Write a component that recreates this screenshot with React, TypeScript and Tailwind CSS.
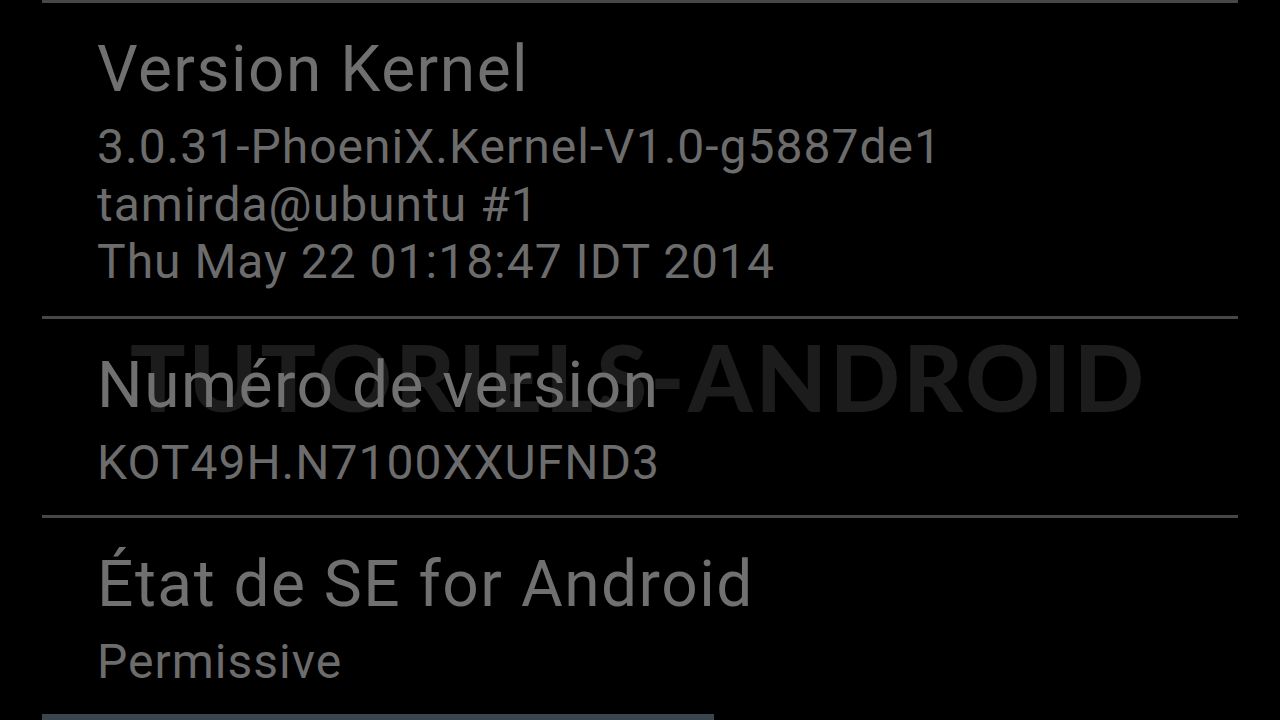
import React from "react";

type Item = { title: string; lines: string[]; pb: string };

const items: Item[] = [
  {
    title: "Version Kernel",
    lines: [
      "3.0.31-PhoeniX.Kernel-V1.0-g5887de1",
      "tamirda@ubuntu #1",
      "Thu May 22 01:18:47 IDT 2014",
    ],
    pb: "pb-[25.5px]",
  },
  { title: "Numéro de version", lines: ["KOT49H.N7100XXUFND3"], pb: "pb-[23.5px]" },
  { title: "État de SE for Android", lines: ["Permissive"], pb: "pb-[23.5px]" },
];

function Row({ item }: { item: Item }) {
  return (
    <div className={`pl-[55px] pt-[29px] ${item.pb}`}>
      <div className="text-[64px] leading-[76px] tracking-[1.5px] text-[#707070]">{item.title}</div>
      <div className="mt-[10px] text-[48px] leading-[57.5px] tracking-[1px] text-[#6c6c6c]">
        {item.lines.map((l) => (
          <div key={l}>{l}</div>
        ))}
      </div>
    </div>
  );
}

export default function App() {
  return (
    <div
      className="relative w-[1280px] h-[720px] bg-black overflow-hidden"
      style={{ fontFamily: "Roboto, 'Noto Sans', sans-serif" }}
    >
      {/* watermark, behind the list */}
      <div
        className="absolute left-[130px] top-[322px] text-[92px] leading-[110px] font-black tracking-[3.2px] text-[#1c1c1c] pointer-events-none select-none"
        style={{ fontFamily: "Lato, 'Open Sans', sans-serif" }}
      >
        TUTORIELS-ANDROID
      </div>

      <div className="relative px-[42px]">
        {items.map((item) => (
          <div key={item.title}>
            <div className="h-[3px] bg-[#474747]" />
            <Row item={item} />
          </div>
        ))}
        <div className="w-[672px] h-[6px] bg-[#3b454e]" />
      </div>
    </div>
  );
}
